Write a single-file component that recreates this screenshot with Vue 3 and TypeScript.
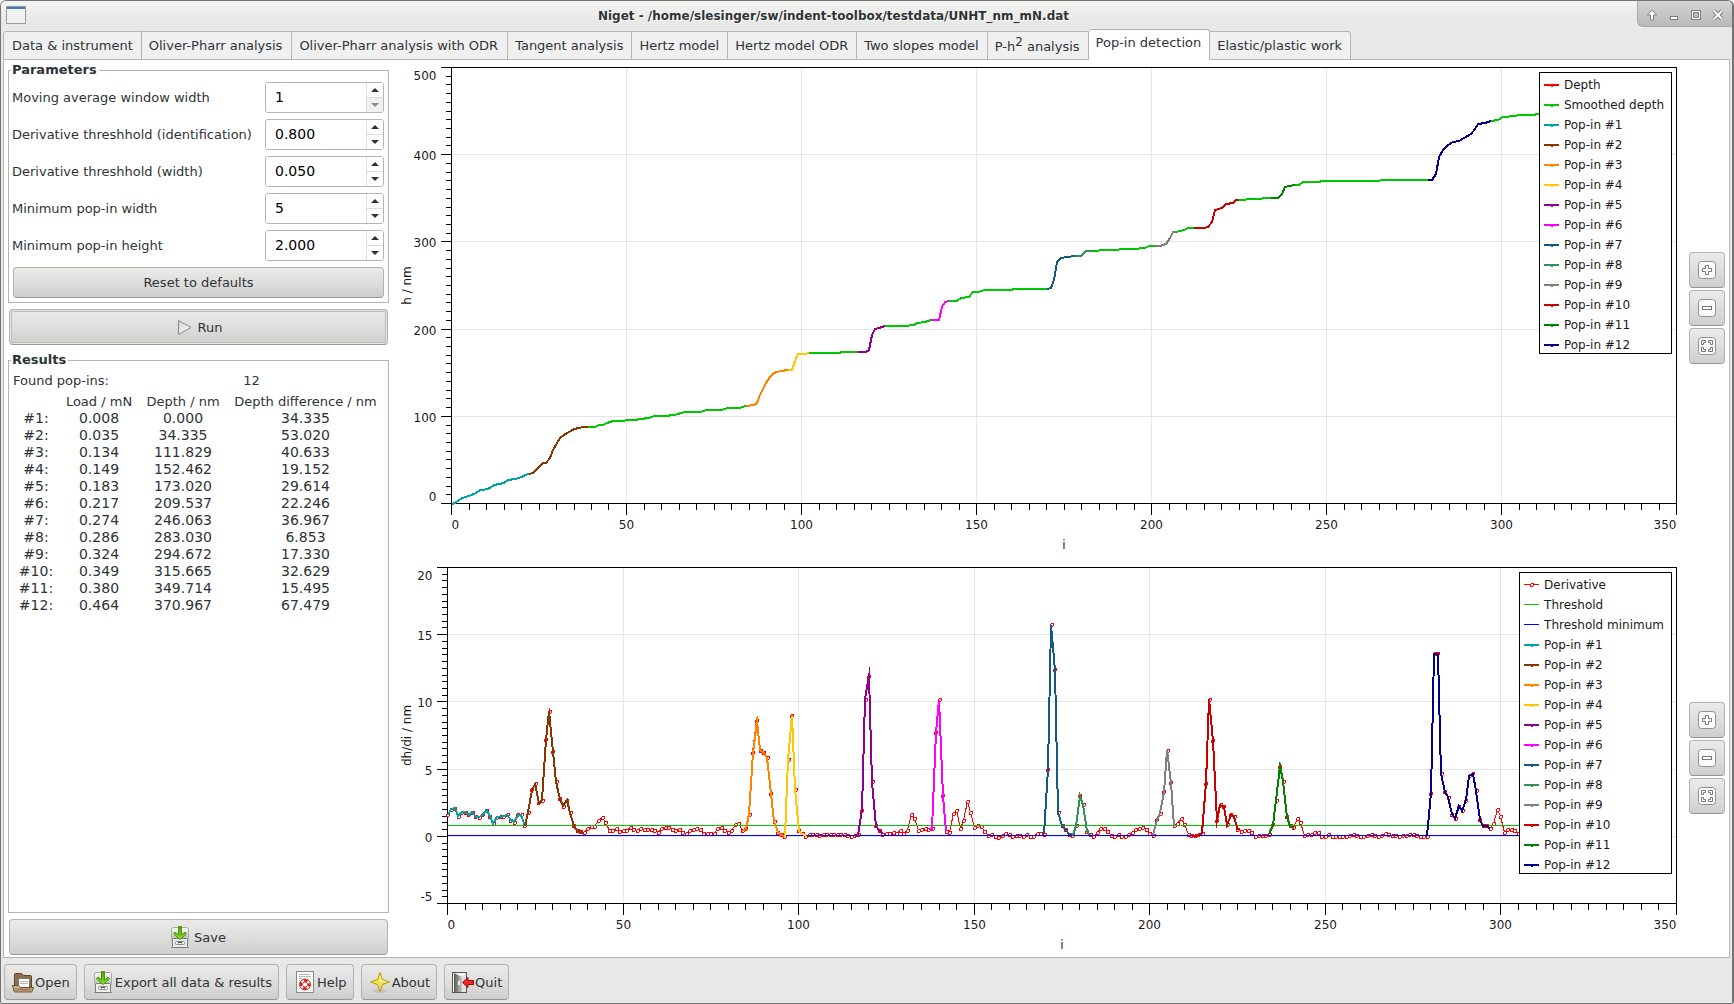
<script setup lang="ts">
import { computed, onBeforeUnmount, onMounted, reactive, ref } from 'vue'

type Point = [number, number]

interface Series {
  label: string
  color: string
  width: number
  points: Point[]
  markers: boolean
}

interface LegendEntry {
  label: string
  color: string
  width: number
  marker: 'dot' | 'ring' | 'none'
}

interface Chart {
  id: string
  yLabel: string
  yMin: number
  yMax: number
  yMajor: number
  yMinor: number
  left: number
  series: Series[]
  legend: LegendEntry[]
}

const tabs = [
  'Data & instrument',
  'Oliver-Pharr analysis',
  'Oliver-Pharr analysis with ODR',
  'Tangent analysis',
  'Hertz model',
  'Hertz model ODR',
  'Two slopes model',
  'P-h2 analysis',
  'Pop-in detection',
  'Elastic/plastic work',
]
const activeTab = ref('Pop-in detection')

const defaults = [
  { id: 'window', label: 'Moving average window width', value: '1', step: 1, digits: 0, min: 1 },
  { id: 'ident', label: 'Derivative threshhold (identification)', value: '0.800', step: 0.1, digits: 3, min: 0 },
  { id: 'width', label: 'Derivative threshhold (width)', value: '0.050', step: 0.01, digits: 3, min: 0 },
  { id: 'minw', label: 'Minimum pop-in width', value: '5', step: 1, digits: 0, min: 1 },
  { id: 'minh', label: 'Minimum pop-in height', value: '2.000', step: 0.1, digits: 3, min: 0 },
]
const params = reactive(defaults.map((p) => ({ ...p })))

function spin(index: number, direction: number) {
  const p = params[index]
  p.value = Math.max(p.min, Number(p.value) + direction * p.step).toFixed(p.digits)
}

function resetParams() {
  defaults.forEach((d, k) => (params[k].value = d.value))
}

const results = [
  ['#1:', '0.008', '0.000', '34.335'],
  ['#2:', '0.035', '34.335', '53.020'],
  ['#3:', '0.134', '111.829', '40.633'],
  ['#4:', '0.149', '152.462', '19.152'],
  ['#5:', '0.183', '173.020', '29.614'],
  ['#6:', '0.217', '209.537', '22.246'],
  ['#7:', '0.274', '246.063', '36.967'],
  ['#8:', '0.286', '283.030', '6.853'],
  ['#9:', '0.324', '294.672', '17.330'],
  ['#10:', '0.349', '315.665', '32.629'],
  ['#11:', '0.380', '349.714', '15.495'],
  ['#12:', '0.464', '370.967', '67.479'],
]

// First index, last index and colour of every detected pop-in
const popIns: [number, number, string][] = [
  [0, 22, '#00a3a3'],
  [22, 39, '#873600'],
  [84, 96, '#ff8200'],
  [96, 102, '#ffc800'],
  [116, 124, '#910091'],
  [137, 142, '#ff00ff'],
  [170, 178, '#145a82'],
  [178, 183, '#329155'],
  [201, 207, '#808080'],
  [212, 225, '#c80000'],
  [234, 241, '#008200'],
  [279, 297, '#00008c'],
]

const depth: Point[] = [
  [0, 0], [1, 1], [3, 6], [5, 9], [7, 12], [8, 15], [9, 15.4], [10, 17], [11, 18], [12, 21], [15, 24], [16, 27],
  [18, 28.5], [20, 30], [21, 33], [22, 34.3], [23.4, 35], [25, 41.5], [26, 46.2], [27, 46.6], [28, 52], [29, 61],
  [30, 69.6], [31, 75], [32, 78], [33, 80.3], [34, 83], [35, 85], [36.3, 86.4], [37.5, 87.5], [39, 87.8], [41, 88],
  [42, 89.5], [43.4, 90.3], [44.4, 92.5], [46, 94.5], [49, 95], [50, 95.6], [52, 96], [56, 98.3], [58, 99.8],
  [61, 100.5], [63.5, 102], [66.8, 104.4], [71, 105], [73, 106.7], [77, 107.5], [79, 109], [82, 109.7], [84, 112.3],
  [86.3, 113], [87.2, 115.5], [88, 124.6], [89, 131.5], [90, 138.4], [91, 144.5], [92, 150.2], [93, 151], [94, 152.5],
  [96, 153], [97.3, 153], [98.1, 163.6], [99.1, 171.3], [101, 171.6], [102, 172.8], [110, 172.9], [112, 173.5],
  [116, 173.5], [118.3, 173.5], [119.3, 175.8], [120, 193.4], [121, 200.3], [122, 201.8], [124, 203.3], [129.2, 203.7],
  [132, 204.9], [133, 207.5], [135.2, 208.7], [137, 210.2], [139.2, 210.6], [140, 225.5], [141, 230.9], [142, 232],
  [144.3, 232.4], [145.5, 235.8], [147.8, 237.3], [149, 242.3], [150.8, 242.7], [152.2, 244.6], [159.8, 245],
  [160.7, 245.8], [170, 245.8], [171.2, 246.9], [172.1, 256.1], [173.1, 277.5], [174, 281.3], [175.9, 282.5],
  [178, 283.6], [180, 284], [181.3, 289.3], [183, 290.1], [186.9, 291.2], [194.8, 291.6], [198, 293.2], [199.4, 295.1],
  [201, 295.1], [202.5, 295.5], [204.2, 298.1], [205.3, 303.9], [206.1, 311.1], [207, 311.9], [209.2, 313.8],
  [210.3, 315.7], [212, 315.7], [215.1, 316.1], [216.2, 317.2], [217.2, 323], [218, 337.1], [220, 339], [221.3, 342.9],
  [223.3, 344.8], [224.2, 347.8], [225, 348.2], [228.9, 349.7], [234, 350.1], [236.1, 350.5], [237.2, 355.5],
  [238.1, 362.7], [239.4, 363.9], [241, 365], [242, 365.8], [243.3, 368.5], [248, 368.9], [248.6, 369.6], [265.1, 370],
  [265.6, 370.8], [279, 370.8], [280, 371.2], [281.4, 377.7], [282, 397.5], [283.3, 405.9], [284.7, 410.9],
  [286.1, 414.4], [287.9, 415.9], [289.3, 419.7], [291.2, 423.5], [292.3, 429.6], [293.3, 435], [295.2, 436.9],
  [297, 438.4], [299.1, 439.6], [300.4, 443], [303.9, 444.6], [305, 445.3], [308.9, 445.7], [310.5, 446.9], [312, 447],
]

// dh/di sampled at every index, starting from zero
const derivative: Point[] = [
  1.6, 2.0, 2.1, 1.5, 1.8, 1.8, 1.6, 1.8, 1.45, 1.4, 1.6, 1.95, 1.5, 0.95, 1.4, 1.45, 1.5, 1.6, 1.2, 1.05, 1.6, 1.6,
  0.8, 1.8, 3.45, 3.9, 2.5, 2.7, 7.2, 9.3, 6.3, 4.05, 2.8, 2.25, 2.7, 1.75, 0.8, 0.4, 0.35, 0.25, 0.6, 0.7, 0.7, 1.15,
  1.4, 1.0, 0.4, 0.45, 0.57, 0.35, 0.4, 0.42, 0.65, 0.47, 0.4, 0.6, 0.5, 0.5, 0.52, 0.4, 0.3, 0.6, 0.67, 0.67, 0.5,
  0.45, 0.5, 0.3, 0.2, 0.45, 0.5, 0.57, 0.5, 0.2, 0.2, 0.2, 0.22, 0.6, 0.65, 0.4, 0.3, 0.42, 0.85, 0.93, 0.42, 0.55,
  1.65, 6.2, 8.6, 6.4, 6.2, 5.85, 3.2, 1.1, 0.3, 0.1, 0.0, 5.7, 9.0, 3.5, 0.4, 0.2, 0.0, 0.1, 0.17, 0.1, 0.03, 0.1,
  0.1, 0.1, 0.1, 0.1, 0.1, 0.1, 0.05, -0.02, 0.05, 0.1, 1.95, 10.2, 11.9, 4.05, 0.8, 0.45, 0.15, 0.22, 0.22, 0.25,
  0.22, 0.4, 0.2, 0.4, 1.65, 1.35, 0.4, 0.5, 0.55, 0.52, 0.57, 7.75, 10.15, 3.0, 0.37, 0.25, 1.7, 1.9, 0.6, 1.2, 2.6,
  1.8, 0.67, 0.8, 0.75, 0.35, 0.05, 0.12, 0.0, -0.1, 0.05, 0.2, 0.17, -0.05, 0.03, 0.03, -0.05, 0.1, 0.0, 0.0, 0.2,
  0.2, 0.15, 5.0, 15.75, 12.4, 1.8, 0.8, 0.5, 0.15, 0.07, 0.8, 3.0, 2.35, 0.37, 0.1, -0.05, 0.25, 0.6, 0.55, 0.35,
  0.05, 0.02, 0.1, -0.02, 0.0, 0.1, 0.27, 0.5, 0.57, 0.67, 0.5, 0.2, 0.07, 1.25, 1.7, 3.3, 6.4, 4.0, 0.8, 0.97, 1.35,
  0.85, 0.15, 0.05, 0.05, 0.1, 0.22, 3.95, 10.2, 7.1, 1.2, 2.35, 2.2, 0.85, 1.6, 1.45, 0.5, 0.37, 0.4, 0.4, 0.27,
  -0.05, 0.05, 0.03, 0.03, 0.15, 0.85, 2.7, 5.2, 4.1, 1.45, 0.8, 0.65, 1.35, 1.0, 0.05, 0.1, 0.12, 0.27, 0.27, -0.02,
  -0.05, 0.1, 0.0, 0.02, 0.0, -0.05, 0.02, 0.06, 0.1, 0.08, 0.0, -0.03, 0.03, 0.1, 0.03, 0.02, 0.06, 0.2, 0.1, 0.05,
  0.08, 0.0, 0.05, 0.07, 0.1, 0.1, 0.03, 0.0, -0.03, 0.0, 3.2, 13.6, 13.6, 4.65, 3.3, 2.9, 1.65, 1.35, 2.25, 1.9, 2.7,
  4.5, 4.65, 3.4, 1.25, 0.8, 0.8, 0.57, 0.95, 2.0, 1.45, 0.3, 0.5, 0.5, 0.4, 0.2, 0.1, 0.1,
].map((value, index): Point => [index, value])

function slice(points: Point[], from: number, to: number): Point[] {
  return points.filter(([i]) => i >= from && i <= to)
}

function popInSeries(points: Point[]): Series[] {
  return popIns.map(([from, to, color], k) => ({
    label: `Pop-in #${k + 1}`,
    color,
    width: 2,
    points: slice(points, from, to),
    markers: false,
  }))
}

const popInLegend: LegendEntry[] = popIns.map(([, , color], k) => ({
  label: `Pop-in #${k + 1}`,
  color,
  width: 2,
  marker: 'dot',
}))

const charts: Chart[] = [
  {
    id: 'depth',
    yLabel: 'h / nm',
    yMin: 0,
    yMax: 500,
    yMajor: 100,
    yMinor: 10,
    left: 56,
    series: [
      { label: 'Smoothed depth', color: '#00c800', width: 2, points: depth, markers: false },
      ...popInSeries(depth),
    ],
    legend: [
      { label: 'Depth', color: '#ff0000', width: 2, marker: 'dot' },
      { label: 'Smoothed depth', color: '#00c800', width: 2, marker: 'dot' },
      ...popInLegend,
    ],
  },
  {
    id: 'derivative',
    yLabel: 'dh/di / nm',
    yMin: -5,
    yMax: 20,
    yMajor: 5,
    yMinor: 0.5,
    left: 52,
    series: [
      { label: 'Derivative', color: '#ff0000', width: 1, points: derivative, markers: true },
      { label: 'Threshold', color: '#00c800', width: 1, points: [[0, 0.8], [312, 0.8]], markers: false },
      { label: 'Threshold minimum', color: '#0000ff', width: 1, points: [[0, 0.05], [312, 0.05]], markers: false },
      ...popInSeries(derivative),
    ],
    legend: [
      { label: 'Derivative', color: '#ff0000', width: 1, marker: 'ring' },
      { label: 'Threshold', color: '#00c800', width: 1, marker: 'none' },
      { label: 'Threshold minimum', color: '#0000ff', width: 1, marker: 'none' },
      ...popInLegend,
    ],
  },
]

const X_MAX = 350
const MARGIN = { top: 6, right: 7, bottom: 52 }

const sizes = reactive([
  { w: 1288, h: 494 },
  { w: 1288, h: 394 },
])
const plots = ref<HTMLElement[]>([])
let observer: ResizeObserver | undefined

function measure() {
  plots.value.forEach((el, k) => {
    sizes[k].w = Math.round(el.clientWidth)
    sizes[k].h = Math.round(el.clientHeight)
  })
}

onMounted(() => {
  measure()
  observer = new ResizeObserver(measure)
  plots.value.forEach((el) => observer?.observe(el))
})
onBeforeUnmount(() => observer?.disconnect())

const drawn = computed(() =>
  charts.map((c, k) => {
    const { w, h } = sizes[k]
    const x0 = c.left
    const x1 = w - MARGIN.right
    const y0 = h - MARGIN.bottom
    const y1 = MARGIN.top
    const sx = (v: number) => x0 + (v / X_MAX) * (x1 - x0) + 0.5
    const sy = (v: number) => y0 - ((v - c.yMin) / (c.yMax - c.yMin)) * (y0 - y1) + 0.5
    const snap = (v: number) => Math.floor(v) + 0.5

    const xTicks = Array.from({ length: X_MAX / 5 + 1 }, (_, n) => ({
      value: n * 5,
      pos: snap(sx(n * 5)),
      major: n % 10 === 0,
      anchor: n === 0 ? 'start' : n * 5 === X_MAX ? 'end' : 'middle',
    }))
    const count = Math.round((c.yMax - c.yMin) / c.yMinor)
    const yTicks = Array.from({ length: count + 1 }, (_, n) => {
      const value = c.yMin + n * c.yMinor
      const shift = n === 0 ? -3 : n === count ? 12 : 5
      return { value, pos: snap(sy(value)), major: n % 10 === 0, text: snap(sy(value)) + shift }
    })
    // Odd widths sit on pixel centres, even widths on pixel edges
    const series = c.series.map((s) => {
      const align = (v: number) => (s.width % 2 ? snap(v) : Math.round(v))
      const pts = s.points.map(([i, v]): Point => [align(sx(i)), align(sy(v))])
      return { ...s, pts, path: pts.map((p) => p.join(',')).join(' ') }
    })
    return { ...c, w, h, x0: x0 + 0.5, x1: x1 + 0.5, y0: y0 + 0.5, y1: y1 + 0.5, xTicks, yTicks, series }
  }),
)

const actions = [
  { icon: 'open', label: 'Open' },
  { icon: 'save', label: 'Export all data & results' },
  { icon: 'help', label: 'Help' },
  { icon: 'about', label: 'About' },
  { icon: 'quit', label: 'Quit' },
]
const zoomTools = [
  { id: 'in', label: 'Zoom in' },
  { id: 'out', label: 'Zoom out' },
  { id: 'fit', label: 'Restore zoom' },
]
</script>

<template>
  <div class="window">
    <svg class="defs" aria-hidden="true">
      <defs>
        <linearGradient id="drive" x1="0" y1="0" x2="0" y2="1">
          <stop offset="0" stop-color="#ffffff" />
          <stop offset="1" stop-color="#b4b6b2" />
        </linearGradient>
        <linearGradient id="arrow" x1="0" y1="0" x2="0" y2="1">
          <stop offset="0" stop-color="#4e9a06" />
          <stop offset="1" stop-color="#8ae234" />
        </linearGradient>
        <linearGradient id="door" x1="0" y1="0" x2="1" y2="0">
          <stop offset="0" stop-color="#555753" />
          <stop offset="1" stop-color="#c9cac7" />
        </linearGradient>
        <linearGradient id="play" x1="0" y1="0" x2="1" y2="1">
          <stop offset="0" stop-color="#d3d3d0" />
          <stop offset="1" stop-color="#ffffff" />
        </linearGradient>
        <symbol id="icon-save" viewBox="0 0 24 24">
          <path d="M3 22.500h18" stroke="#8b8d89" />
          <rect x="3.500" y="2.500" width="17" height="13" rx="2" fill="url(#drive)" stroke="#a5a7a3" />
          <rect x="4.500" y="13.500" width="15" height="9" rx="1" fill="#eeeeec" stroke="#777975" />
          <rect x="7.500" y="16.500" width="9" height="3" rx="1" fill="#fff" stroke="#888a85" />
          <path d="M10 18.500v-1h4v1" fill="none" stroke="#555753" />
          <path d="M10.500 1.500h3v8.500l3.500-3 1.500 2-6.500 5.500L5.500 9 7 7l3.500 3z" fill="url(#arrow)" stroke="#4e9a06" />
        </symbol>
        <symbol id="icon-open" viewBox="0 0 24 24">
          <path d="M3.500 17V4.500q0-1 1-1h6l2 2h7q1 0 1 1V17z" fill="#8f6f45" stroke="#5c4526" />
          <rect x="7.500" y="8.500" width="11" height="9" fill="#fff" stroke="#777975" />
          <path d="M9 11.500h8M9 13.500h8" stroke="#b5b7b3" />
          <path d="M1.500 15.500h6l2 2h13l-1.500 4q0 .500-1 .500H4q-1 0-1-1z" fill="#c5ae87" stroke="#6e552f" />
          <path d="M4 19.500h16" stroke="#9b8159" stroke-width="2" />
        </symbol>
        <symbol id="icon-help" viewBox="0 0 24 24">
          <rect x="3.500" y="1.500" width="17" height="21" fill="#f8f8f7" stroke="#888a85" />
          <path d="M6 4.500h11M6 6.500h12M6 8.500h3M6 10.500h1" stroke="#babdb6" />
          <circle cx="12" cy="14.500" r="4" fill="none" stroke="#eeeeec" stroke-width="3" />
          <circle cx="12" cy="14.500" r="4" fill="none" stroke="#e02020" stroke-width="3" stroke-dasharray="3.640 2.640" stroke-dashoffset="1.800" />
          <circle cx="12" cy="14.500" r="5.500" fill="none" stroke="#b84040" />
          <circle cx="12" cy="14.500" r="2.500" fill="#fff" stroke="#c85050" />
        </symbol>
        <symbol id="icon-about" viewBox="0 0 24 24">
          <ellipse cx="12" cy="21" rx="7" ry="2" fill="#c4c4c1" />
          <path d="M12 2.500L14.500 9.500 21.500 12 14.500 14.500 12 21.500 9.500 14.500 2.500 12 9.500 9.500z" fill="#f5e04a" stroke="#b59b0e" stroke-linejoin="round" />
          <path d="M12 5l1.500 5.500L19 12h-7z" fill="#fff8b5" />
        </symbol>
        <symbol id="icon-quit" viewBox="0 0 24 24">
          <rect x="1.500" y="2.500" width="14" height="20" fill="#f4f4f3" stroke="#555753" />
          <path d="M3 3l8 4v15H3z" fill="url(#door)" />
          <path d="M11 7l4-4v19h-4z" fill="#e2e2e0" />
          <path d="M8 11v4" stroke="#eee" stroke-width="2" />
          <path d="M11.500 12.500L17 7.500v3h5.500v4H17v3z" fill="#ef2929" stroke="#a40000" />
        </symbol>
        <symbol id="icon-run" viewBox="0 0 24 24">
          <path d="M6.500 5.500v14L19 12.500z" fill="url(#play)" stroke="#8b8d89" stroke-linejoin="round" />
        </symbol>
        <symbol id="icon-in" viewBox="0 0 24 24">
          <rect x="3.500" y="3.500" width="17" height="17" rx="3" fill="#fafaf9" stroke="#8f918d" />
          <path d="M10.500 7.500h3v3h3v3h-3v3h-3v-3h-3v-3h3z" fill="#fff" stroke="#777975" />
        </symbol>
        <symbol id="icon-out" viewBox="0 0 24 24">
          <rect x="3.500" y="3.500" width="17" height="17" rx="3" fill="#fafaf9" stroke="#8f918d" />
          <rect x="7.500" y="10.500" width="9" height="3" fill="#fff" stroke="#777975" />
        </symbol>
        <symbol id="icon-fit" viewBox="0 0 24 24">
          <rect x="3.500" y="3.500" width="17" height="17" rx="3" fill="#fafaf9" stroke="#8f918d" />
          <path
            d="M6.500 6.500h4v2h-2v2h-2zM17.500 6.500h-4v2h2v2h2zM6.500 17.500h4v-2h-2v-2h-2zM17.500 17.500h-4v-2h2v-2h2z"
            fill="#fff"
            stroke="#777975"
          />
        </symbol>
      </defs>
    </svg>

    <header class="titlebar">
      <svg class="app-icon" width="20" height="18" viewBox="0 0 20 18" aria-hidden="true">
        <rect x=".5" y=".5" width="19" height="17" fill="#f1f1ef" stroke="#9b9d99" />
        <path d="M1 2h18" stroke="#4a78b5" stroke-width="2" />
      </svg>
      <h1>Niget - /home/slesinger/sw/indent-toolbox/testdata/UNHT_nm_mN.dat</h1>
      <div class="window-controls">
        <button type="button" aria-label="Shade">
          <svg width="12" height="12" viewBox="0 0 12 12"><path d="M6 1L1.500 6H4.500v5h3V6h3z" fill="#fff" stroke="#7d7d7d" /></svg>
        </button>
        <button type="button" aria-label="Minimize">
          <svg width="12" height="12" viewBox="0 0 12 12"><rect x="2.500" y="7.500" width="7" height="3" fill="#fff" stroke="#7d7d7d" /></svg>
        </button>
        <button type="button" aria-label="Maximize">
          <svg width="12" height="12" viewBox="0 0 12 12">
            <rect x="1.500" y="1.500" width="9" height="9" fill="#fff" stroke="#7d7d7d" />
            <rect x="3.500" y="3.500" width="5" height="5" fill="#bbb" stroke="#7d7d7d" />
          </svg>
        </button>
        <button type="button" aria-label="Close">
          <svg width="12" height="12" viewBox="0 0 12 12">
            <path d="M2 2l8 8M10 2l-8 8" stroke="#7d7d7d" stroke-width="4" />
            <path d="M2 2l8 8M10 2l-8 8" stroke="#fff" stroke-width="2" />
          </svg>
        </button>
      </div>
    </header>

    <nav class="tabs" role="tablist">
      <button
        v-for="tab in tabs"
        :key="tab"
        type="button"
        role="tab"
        class="tab"
        :class="{ active: tab === activeTab }"
        :aria-selected="tab === activeTab"
        @click="activeTab = tab"
      >
        <template v-if="tab === 'P-h2 analysis'">P-h<sup>2</sup> analysis</template>
        <template v-else>{{ tab }}</template>
      </button>
    </nav>

    <main class="page">
      <section class="side">
        <fieldset class="frame">
          <legend>Parameters</legend>
          <div v-for="(p, k) in params" :key="p.id" class="param">
            <label :for="p.id">{{ p.label }}</label>
            <div class="spin">
              <input :id="p.id" v-model="p.value" type="text" inputmode="decimal" />
              <div class="spin-buttons">
                <button type="button" aria-label="Increase" @click="spin(k, 1)">
                  <svg width="8" height="4" viewBox="0 0 8 4"><path d="M0 4L4 0l4 4z" fill="currentColor" /></svg>
                </button>
                <button type="button" aria-label="Decrease" :disabled="p.id === 'window' && Number(p.value) <= p.min" @click="spin(k, -1)">
                  <svg width="8" height="4" viewBox="0 0 8 4"><path d="M0 0L4 4l4-4z" fill="currentColor" /></svg>
                </button>
              </div>
            </div>
          </div>
          <button type="button" class="btn reset" @click="resetParams">Reset to defaults</button>
        </fieldset>

        <button type="button" class="btn wide run">
          <svg width="24" height="24" aria-hidden="true"><use href="#icon-run" /></svg>Run
        </button>

        <fieldset class="frame results">
          <legend>Results</legend>
          <div class="found"><span>Found pop-ins:</span><span class="number">12</span></div>
          <table>
            <thead>
              <tr><th class="c-id"></th><th class="c-load">Load / mN</th><th class="c-depth">Depth / nm</th><th>Depth difference / nm</th></tr>
            </thead>
            <tbody>
              <tr v-for="row in results" :key="row[0]">
                <td v-for="cell in row" :key="cell">{{ cell }}</td>
              </tr>
            </tbody>
          </table>
        </fieldset>

        <button type="button" class="btn wide">
          <svg width="24" height="24" aria-hidden="true"><use href="#icon-save" /></svg>Save
        </button>
      </section>

      <section class="charts">
        <div v-for="c in drawn" :key="c.id" class="chart" :class="c.id">
          <div ref="plots" class="plot">
            <svg class="canvas" :width="c.w" :height="c.h" role="img" :aria-label="c.yLabel">
              <g class="grid">
                <template v-for="t in c.xTicks" :key="t.value">
                  <line v-if="t.major" :x1="t.pos" :x2="t.pos" :y1="c.y0" :y2="c.y1" />
                </template>
                <template v-for="t in c.yTicks" :key="t.value">
                  <line v-if="t.major" :x1="c.x0" :x2="c.x1" :y1="t.pos" :y2="t.pos" />
                </template>
              </g>
              <g class="axes">
                <rect :x="c.x0" :y="c.y1" :width="c.x1 - c.x0" :height="c.y0 - c.y1" />
                <line v-for="t in c.xTicks" :key="t.value" :x1="t.pos" :x2="t.pos" :y1="c.y0" :y2="c.y0 + (t.major ? 11 : 6)" />
                <line v-for="t in c.yTicks" :key="t.value" :y1="t.pos" :y2="t.pos" :x1="c.x0" :x2="c.x0 - (t.major ? 11 : 6)" />
              </g>
              <g class="labels">
                <template v-for="t in c.xTicks" :key="t.value">
                  <text v-if="t.major" :x="t.pos" :y="c.y0 + 25" :text-anchor="t.anchor">{{ t.value }}</text>
                </template>
                <template v-for="t in c.yTicks" :key="t.value">
                  <text v-if="t.major" :x="c.x0 - 15" :y="t.text" text-anchor="end">{{ t.value }}</text>
                </template>
                <text :x="(c.x0 + c.x1) / 2" :y="c.y0 + 45" text-anchor="middle">i</text>
                <text :transform="`translate(16 ${(c.y0 + c.y1) / 2}) rotate(-90)`" text-anchor="middle">{{ c.yLabel }}</text>
              </g>
              <g class="curves">
                <template v-for="s in c.series" :key="s.label">
                  <polyline :points="s.path" :stroke="s.color" :stroke-width="s.width" />
                  <template v-if="s.markers">
                    <circle v-for="p in s.pts" :key="p[0]" class="ring" :cx="p[0] + 0.5" :cy="p[1] + 0.5" r="1.5" :stroke="s.color" />
                  </template>
                </template>
              </g>
            </svg>
            <ul class="legend">
              <li v-for="l in c.legend" :key="l.label">
                <svg width="15" height="6" viewBox="0 0 15 6" aria-hidden="true">
                  <rect x="0" y="2" width="15" :height="l.width" :fill="l.color" />
                  <rect v-if="l.marker === 'dot'" x="7" y="2" width="2" height="3" :fill="l.color" />
                  <circle v-if="l.marker === 'ring'" cx="8" cy="3" r="1.5" fill="#fff" :stroke="l.color" />
                </svg>
                {{ l.label }}
              </li>
            </ul>
          </div>
          <div class="tools">
            <button v-for="z in zoomTools" :key="z.id" type="button" class="btn tool" :aria-label="z.label">
              <svg width="24" height="24" aria-hidden="true"><use :href="`#icon-${z.id}`" /></svg>
            </button>
          </div>
        </div>
      </section>
    </main>

    <footer class="actions">
      <button v-for="a in actions" :key="a.label" type="button" class="btn">
        <svg width="24" height="24" aria-hidden="true"><use :href="`#icon-${a.icon}`" /></svg>{{ a.label }}
      </button>
    </footer>
  </div>
</template>

<style>
body {
  margin: 0;
  background: #fff;
}
</style>

<style scoped>
.window,
.window * {
  box-sizing: border-box;
}

.window {
  display: flex;
  flex-direction: column;
  min-height: 100vh;
  border: 1px solid #757272;
  border-right-width: 2px;
  border-radius: 6px 6px 2px 2px;
  background: #e8e8e6;
  color: #2e3436;
  font-family: 'DejaVu Sans', sans-serif;
  font-size: 13px;
  line-height: 17px;
}

.window button,
.window input {
  font: inherit;
  color: inherit;
}

.defs {
  position: absolute;
  width: 0;
  height: 0;
}

.titlebar {
  display: flex;
  align-items: flex-start;
  height: 28px;
  padding-left: 5px;
  border-radius: 5px 5px 0 0;
  background: linear-gradient(#f3f3f2, #e8e8e6 20px);
}

.app-icon {
  margin-top: 5px;
}

.titlebar h1 {
  flex: 1;
  margin: 0;
  padding-left: 4px;
  font-size: 12px;
  font-weight: bold;
  line-height: 30px;
  text-align: center;
  text-shadow: 1px 1px 0 #fff;
  white-space: nowrap;
}

.window-controls {
  display: flex;
  justify-content: space-between;
  width: 95px;
  height: 26px;
  padding: 0 8px;
  border: solid #a9a9a7;
  border-width: 0 0 1px 1px;
  border-radius: 0 5px 0 6px;
  background: linear-gradient(#d4d4d3, #b9b9b8);
}

.window-controls button {
  display: flex;
  align-items: center;
  padding: 3px 0 0;
  border: 0;
  background: none;
}

.tabs {
  position: relative;
  z-index: 1;
  display: flex;
  align-items: flex-end;
  margin: 0 2px -1px;
  height: 31px;
}

.tab {
  height: 29px;
  padding: 0 9px 0 7px;
  border: 1px solid #b4b4b0;
  border-left-width: 0;
  background: #f0f0f0;
  white-space: nowrap;
}

.tab:first-child {
  padding: 0 8px;
  border-left-width: 1px;
  border-top-left-radius: 3px;
}

/* The tabs from the fourth on are packed a little tighter */
.tab:nth-child(n + 4) {
  padding-right: 8px;
}

.tab:last-child {
  border-top-right-radius: 3px;
}

.tab.active {
  height: 31px;
  padding-bottom: 4px;
  border-bottom-color: #fff;
  border-radius: 3px 3px 0 0;
  background: #fff;
}

.tab sup {
  font-size: 12px;
  line-height: 13px;
}

.page {
  display: flex;
  flex: 1;
  margin: 0 2px;
  padding: 1px 4px 2px;
  border: 1px solid #b4b4b0;
  background: #fff;
}

.side {
  display: flex;
  flex-direction: column;
  flex: none;
  width: 381px;
}

.frame {
  position: relative;
  margin: 9px 0 0;
  padding: 11px 4px 4px;
  border: 1px solid #b4b4b0;
}

.frame legend {
  position: absolute;
  top: -10px;
  left: 2px;
  padding: 0 2px 0 1px;
  background: #fff;
  font-weight: bold;
}

.param {
  display: flex;
  align-items: center;
  justify-content: space-between;
  margin: 0 0 6px -1px;
}

.spin {
  display: flex;
  width: 119px;
  height: 31px;
  border: 1px solid #b4b4b0;
  border-radius: 3px;
  overflow: hidden;
}

.spin input {
  flex: 1;
  min-width: 0;
  padding: 0 0 0 9px;
  border: 0;
  background: #fff;
  color: #000;
  font-size: 14px;
}

.spin-buttons {
  display: flex;
  flex-direction: column;
  width: 17px;
  border-left: 1px solid #dcdcda;
}

.spin-buttons button {
  display: flex;
  flex: 1;
  align-items: center;
  justify-content: center;
  padding: 0;
  border: 0;
  background: #fff;
  color: #2e3436;
}

.spin-buttons button + button {
  border-top: 1px solid #dcdcda;
}

.spin-buttons button:disabled {
  background: #f0f0ee;
  color: #8b8d8a;
}

.btn {
  display: flex;
  align-items: center;
  justify-content: center;
  height: 36px;
  padding: 0 6px;
  border: 1px solid #b2b2ae;
  border-bottom-color: #979793;
  border-radius: 4px;
  background: linear-gradient(#eaeae9, #dededd 50%, #cececc);
  white-space: nowrap;
}

.reset {
  width: 371px;
  height: 31px;
}

.wide {
  flex: none;
  gap: 2px;
  margin: 6px 1px 0;
  padding-right: 9px;
}

.run {
  box-shadow: inset 0 0 0 1px #e6e6e4, inset 0 0 0 2px #bcbcb9;
}

.results {
  flex: 1;
  margin-top: 15px;
  padding-top: 11px;
}

.found {
  display: grid;
  grid-template-columns: 106px 1fr;
  margin-bottom: 4px;
}

.found .number {
  text-align: center;
}

table {
  width: 371px;
  table-layout: fixed;
  border-collapse: collapse;
  text-align: center;
}

th {
  padding: 0;
  font-weight: normal;
  white-space: nowrap;
}

td {
  height: 17px;
  padding: 0;
  font-size: 14px;
}

.c-id {
  width: 46px;
}

.c-load {
  width: 80px;
}

.c-depth {
  width: 88px;
}

.charts {
  display: flex;
  flex: 1;
  flex-direction: column;
  gap: 6px;
  min-width: 0;
  padding-left: 6px;
}

.chart {
  display: flex;
  gap: 6px;
  min-height: 0;
}

.depth {
  flex: 1 1 100px;
}

.derivative {
  flex: 1 1 0;
}

.plot {
  position: relative;
  flex: 1;
  min-width: 0;
  min-height: 310px;
}

.canvas {
  position: absolute;
  top: 0;
  left: 0;
  display: block;
}

.grid line {
  stroke: #e5e5e5;
  shape-rendering: crispEdges;
}

.axes {
  fill: none;
  stroke: #000;
  shape-rendering: crispEdges;
}

.labels {
  fill: #1a1a1a;
  font-size: 12px;
}

.curves {
  fill: none;
  stroke-miterlimit: 10;
  shape-rendering: crispEdges;
}

.ring {
  fill: #fff;
}

.legend {
  position: absolute;
  top: 11px;
  right: 11px;
  margin: 0;
  padding: 0 7px 0 4px;
  border: 1px solid #000;
  background: #fff;
  color: #1a1a1a;
  font-size: 12px;
  list-style: none;
}

.legend li {
  display: flex;
  align-items: center;
  gap: 5px;
  height: 20px;
  padding-top: 4px;
  white-space: nowrap;
}

.legend svg {
  shape-rendering: crispEdges;
}

.tools {
  display: flex;
  flex: none;
  flex-direction: column;
  justify-content: center;
  gap: 2px;
}

.tool {
  width: 36px;
  padding: 0;
}

.actions {
  display: flex;
  gap: 7px;
  padding: 6px 3px 3px;
}
</style>
